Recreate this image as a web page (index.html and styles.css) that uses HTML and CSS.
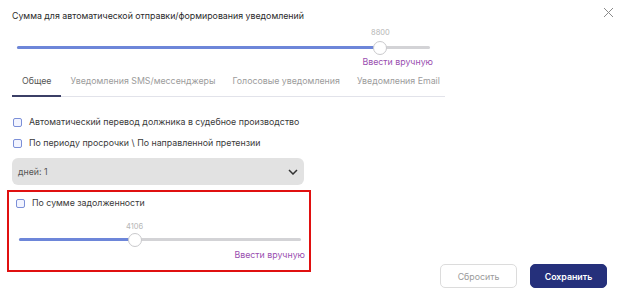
FILE: index.html
```html
<!DOCTYPE html>
<html lang="ru">
<head>
    <meta charset="UTF-8">
    <title>Уведомления</title>
    <link rel="stylesheet" href="styles.css">
</head>
<body>
    <div class="modal">
        <svg class="close" width="11" height="11" viewBox="0 0 11 11">
            <path d="M1 1 L10 10 M10 1 L1 10" stroke="#8a8a8a" stroke-width="1" fill="none"/>
        </svg>

        <div class="top">
            <div class="title">Сумма для автоматической отправки/формирования уведомлений</div>

            <div class="slider slider_main">
                <div class="value" style="left: 88%">8800</div>
                <div class="track">
                    <div class="fill" style="width: 88%"></div>
                    <div class="thumb" style="left: 88%"></div>
                </div>
                <a class="manual" href="#">Ввести вручную</a>
            </div>

            <div class="tabs">
                <div class="tab active">Общее</div>
                <div class="tab">Уведомления SMS/мессенджеры</div>
                <div class="tab">Голосовые уведомления</div>
                <div class="tab">Уведомления Email</div>
            </div>
        </div>

        <div class="form">
            <label class="check"><span class="box"></span>Автоматический перевод должника в судебное производство</label>
            <label class="check"><span class="box"></span>По периоду просрочки \ По направленной претензии</label>

            <div class="select">
                <span>дней: 1</span>
                <svg width="10" height="6" viewBox="0 0 10 6">
                    <path d="M1 1 L5 5 L9 1" stroke="#333" stroke-width="1.5" fill="none"/>
                </svg>
            </div>

            <div class="bottom">
                <div class="debt">
                    <label class="check"><span class="box"></span>По сумме задолженности</label>
                    <div class="slider slider_debt">
                        <div class="value" style="left: 41%">4106</div>
                        <div class="track">
                            <div class="fill" style="width: 41%"></div>
                            <div class="thumb" style="left: 41%"></div>
                        </div>
                        <a class="manual" href="#">Ввести вручную</a>
                    </div>
                </div>

                <div class="footer">
                    <button class="btn reset">Сбросить</button>
                    <button class="btn save">Сохранить</button>
                </div>
            </div>
        </div>
    </div>
</body>
</html>
```

FILE: styles.css
```css
body {
    margin: 0;
    background-color: #fff;
    font-family: Inter, 'Noto Sans', sans-serif;
    font-size: 8.8px;
    color: #333;
}

.modal {
    position: relative;
    width: 623px;
    height: 300px;
    padding: 10px 12px 0 12px;
    box-sizing: border-box;
}

.close {
    position: absolute;
    top: 7px;
    right: 9px;
}

.top {
    width: 433px;
}

.title {
    line-height: 12px;
    color: #2a2a2a;
}

/* слайдеры */
.slider {
    position: relative;
}

.slider_main {
    margin-left: 5px;
    width: 413px;
    padding-top: 24px;
}

.value {
    position: absolute;
    top: 6px;
    transform: translateX(-50%);
    font-size: 7.5px;
    line-height: 10px;
    color: #b5b5b5;
}

.track {
    position: relative;
    height: 3px;
    background-color: #d3d3d6;
    border-radius: 2px;
}

.fill {
    height: 100%;
    background-color: #6d86d9;
    border-radius: 2px;
}

.thumb {
    position: absolute;
    top: 50%;
    width: 14px;
    height: 14px;
    transform: translate(-50%, -50%);
    background-color: #fff;
    border: 1px solid #c9c9cc;
    border-radius: 50%;
    box-sizing: border-box;
}

.manual {
    display: block;
    margin-top: 7px;
    text-align: right;
    text-decoration: none;
    color: #9a4fb0;
    line-height: 11px;
}

.slider_main .manual {
    margin-right: -3px;
}

/* вкладки */
.tabs {
    display: flex;
    margin-top: 2px;
    border-bottom: 1px solid #e2e3ea;
}

.tab {
    padding: 6px 8px 9px 9px;
    color: #9c9c9c;
    line-height: 11px;
    white-space: nowrap;
}

.tab.active {
    padding: 6px 10px 9px 10px;
    color: #555;
    border-bottom: 2px solid #3b3f66;
    margin-bottom: -1px;
}

/* форма */
.form {
    padding-top: 19px;
}

.check {
    display: flex;
    align-items: center;
    gap: 7px;
    line-height: 12px;
    color: #3a3a3a;
    margin-left: 1px;
    margin-bottom: 9px;
}

.box {
    width: 9px;
    height: 9px;
    border: 1.5px solid #7b8fd8;
    border-radius: 2px;
    background-color: #f2f4ff;
    box-sizing: border-box;
}

.select {
    display: flex;
    justify-content: space-between;
    align-items: center;
    width: 292px;
    height: 27px;
    margin-top: 4px;
    padding: 0 6px;
    box-sizing: border-box;
    background-color: #e2e2e2;
    border-radius: 6px;
    color: #555;
}

.bottom {
    display: flex;
    align-items: flex-end;
    margin-top: 5px;
}

.debt {
    width: 304px;
    height: 82px;
    margin-left: -5px;
    padding: 5px 8px 0 6px;
    border: 2px solid #e01010;
    box-sizing: border-box;
}

.slider_debt {
    margin-left: 4px;
    padding-top: 20px;
}

.slider_debt .value {
    top: 4px;
}

.slider_debt .manual {
    margin-top: 8px;
    margin-right: -4px;
}

.footer {
    display: flex;
    gap: 13px;
    margin-left: auto;
    margin-right: 4px;
    margin-bottom: -16px;
}

.btn {
    width: 77px;
    height: 24px;
    border-radius: 5px;
    font-family: Inter, 'Noto Sans', sans-serif;
    font-size: 8.8px;
    cursor: pointer;
}

.reset {
    background-color: #fff;
    border: 1px solid #dcdcdc;
    color: #9a9a9a;
}

.save {
    background-color: #25307b;
    border: 1px solid #25307b;
    color: #fff;
    font-weight: 600;
}
```
